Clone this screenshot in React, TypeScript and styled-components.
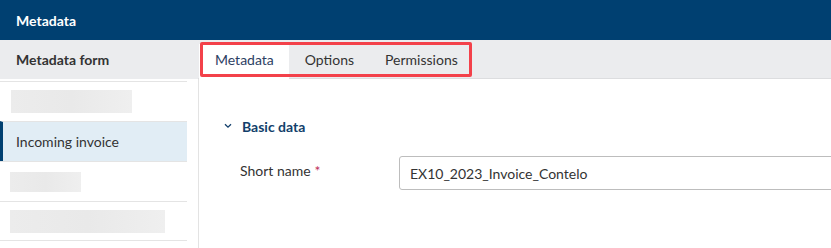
import React from "react";
import styled, { createGlobalStyle } from "styled-components";

const Global = createGlobalStyle`
  html, body { margin: 0; padding: 0; background: #fff; }
  body { font-family: Lato, "Open Sans", sans-serif; color: #333; overflow: hidden; }
  * { box-sizing: border-box; }
`;

const Page = styled.div`
  width: 831px;
  height: 248px;
  display: flex;
  flex-direction: column;
  overflow: hidden;
`;

const Header = styled.header`
  height: 40px;
  flex: none;
  background: #004071;
  color: #fff;
  font-weight: 700;
  font-size: 14px;
  display: flex;
  align-items: center;
  padding-left: 16px;
`;

const Body = styled.div`
  flex: 1;
  display: flex;
  min-height: 0;
`;

const Sidebar = styled.aside`
  width: 199px;
  flex: none;
  display: flex;
  flex-direction: column;
`;

const SidebarHead = styled.div`
  height: 39px;
  flex: none;
  background: #ebecee;
  display: flex;
  align-items: center;
  padding-left: 16px;
  font-weight: 700;
  font-size: 14px;
  color: #333;
`;

const List = styled.ul`
  list-style: none;
  margin: 0;
  padding: 2px 0 0 0;
  width: 187px;
`;

const Item = styled.li<{ $active?: boolean }>`
  height: 40px;
  border-top: 1px solid #e4e4e4;
  display: flex;
  align-items: center;
  padding-left: ${(p) => (p.$active ? "13px" : "10px")};
  font-size: 14px;
  color: #333;
  background: ${(p) => (p.$active ? "#e1edf5" : "#fff")};
  border-left: ${(p) => (p.$active ? "3px solid #004071" : "0")};
  &:last-child { border-bottom: 1px solid #e4e4e4; }
`;

const Placeholder = styled.span<{ $w: number; $h: number; $dx?: number }>`
  display: block;
  width: ${(p) => p.$w}px;
  height: ${(p) => p.$h}px;
  margin-left: ${(p) => p.$dx ?? 0}px;
  background: linear-gradient(90deg, #ececec 0%, #e9e9e9 50%, #efefef 100%);
`;

const Main = styled.main`
  flex: 1;
  display: flex;
  flex-direction: column;
  min-width: 0;
`;

const TabBar = styled.nav`
  position: relative;
  height: 39px;
  flex: none;
  background: #ebecee;
  border-bottom: 1px solid #dcdddf;
  display: flex;
  align-items: flex-end;
  margin-left: -1px;
  padding-left: 1px;
`;

const Tab = styled.div<{ $active?: boolean }>`
  height: 35px;
  margin-bottom: -1px;
  padding: 0 15px 5px 16px;
  display: flex;
  align-items: center;
  font-size: 14px;
  color: ${(p) => (p.$active ? "#2c3e63" : "#333")};
  background: ${(p) => (p.$active ? "#fff" : "transparent")};
`;

const Highlight = styled.div`
  position: absolute;
  left: 2px;
  top: 2px;
  width: 272px;
  height: 35px;
  border: 3px solid #f3414a;
  border-radius: 2px;
  pointer-events: none;
`;

const Content = styled.section`
  flex: 1;
  border-left: 1px solid #e3e3e3;
  margin-left: -1px;
  padding: 37px 0 0 25px;
`;

const SectionHead = styled.div`
  display: flex;
  align-items: center;
  gap: 10px;
  font-weight: 700;
  font-size: 14px;
  color: #123f6b;
  height: 20px;
`;

const FieldRow = styled.div`
  display: flex;
  align-items: flex-start;
  margin-top: 20px;
`;

const Label = styled.label`
  width: 175px;
  flex: none;
  padding-left: 16px;
  padding-top: 6px;
  font-size: 14px;
  color: #333;
`;

const Required = styled.span`
  color: #c0305a;
  margin-left: 4px;
`;

const Input = styled.div`
  flex: 1;
  height: 34px;
  margin-right: -10px;
  border: 1px solid #bdbdbd;
  border-radius: 3px;
  padding-left: 10px;
  display: flex;
  align-items: center;
  font-size: 14px;
  color: #333;
`;

export default function App() {
  return (
    <Page>
      <Global />
      <Header>Metadata</Header>
      <Body>
        <Sidebar>
          <SidebarHead>Metadata form</SidebarHead>
          <List>
            <Item><Placeholder $w={121} $h={23} $dx={1} /></Item>
            <Item $active>Incoming invoice</Item>
            <Item><Placeholder $w={71} $h={20} /></Item>
            <Item><Placeholder $w={155} $h={23} /></Item>
          </List>
        </Sidebar>
        <Main>
          <TabBar>
            <Tab $active>Metadata</Tab>
            <Tab>Options</Tab>
            <Tab>Permissions</Tab>
            <Highlight />
          </TabBar>
          <Content>
            <SectionHead>
              <svg width="8" height="6" viewBox="0 0 8 6">
                <path d="M1 1.2 L4 4.2 L7 1.2" fill="none" stroke="#123f6b" strokeWidth="1.3" />
              </svg>
              Basic data
            </SectionHead>
            <FieldRow>
              <Label>Short name<Required>*</Required></Label>
              <Input>EX10_2023_Invoice_Contelo</Input>
            </FieldRow>
          </Content>
        </Main>
      </Body>
    </Page>
  );
}
